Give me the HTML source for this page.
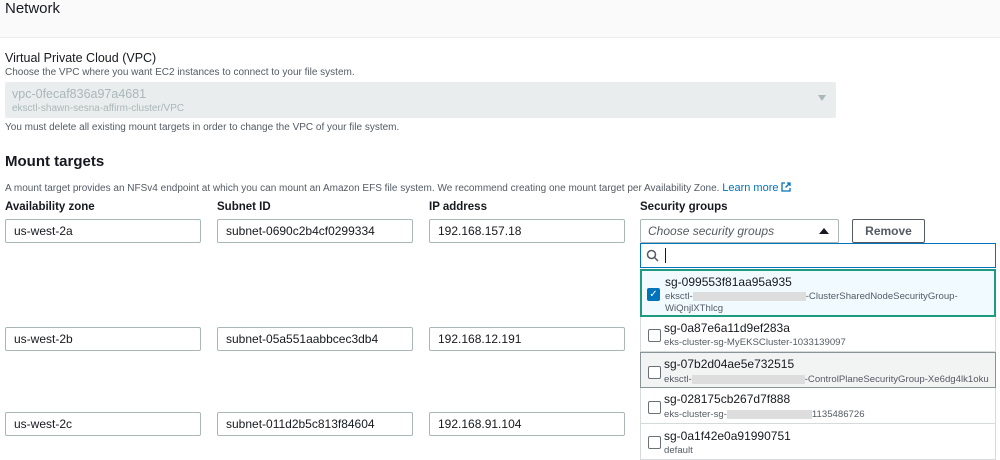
<html><head><style>
body{margin:0;width:1000px;height:456px;overflow:hidden;background:#fff;font-family:"Liberation Sans",sans-serif;color:#16191f;position:relative}
.a{position:absolute;white-space:nowrap}
.inp{position:absolute;border:1px solid #aab7b8;border-radius:2px;font-size:12px;line-height:22px;padding-left:8px;box-sizing:border-box;height:24px;white-space:nowrap}
.opt{position:absolute;left:640px;width:356px;box-sizing:border-box;border:1px solid #d5dbdb;border-top:none;white-space:nowrap;overflow:hidden}
.cb{position:absolute;left:7px;width:11px;height:11px;border:1px solid #687078;border-radius:2px;background:#fff}
.t1{position:absolute;left:23px;font-size:12px}
.t2{position:absolute;left:23px;font-size:9.6px;color:#545b64}
.blur{display:inline-block;background:#ddd;height:9px;vertical-align:middle}
</style></head><body>
<div class="a" style="left:0;top:0;width:1000px;height:37px;background:#fafafa;border-bottom:1px solid #eaeded"></div>
<div class="a" style="left:5px;top:0px;font-size:15px">Network</div>
<div class="a" style="left:5px;top:51px;font-size:12.5px">Virtual Private Cloud (VPC)</div>
<div class="a" style="left:5px;top:67px;font-size:10px;color:#545b64">Choose the VPC where you want EC2 instances to connect to your file system.</div>
<div class="a" style="left:5px;top:82px;width:831px;height:36px;background:#eaeded;border-radius:2px"></div>
<div class="a" style="left:12px;top:87px;font-size:12.5px;color:#aab7b8">vpc-0fecaf836a97a4681</div>
<div class="a" style="left:12px;top:103px;font-size:10px;color:#aab7b8">eksctl-shawn-sesna-affirm-cluster/VPC</div>
<div class="a" style="left:818px;top:95px;width:0;height:0;border-left:4px solid transparent;border-right:4px solid transparent;border-top:6px solid #aab7b8"></div>
<div class="a" style="left:5px;top:122px;font-size:10px;color:#545b64">You must delete all existing mount targets in order to change the VPC of your file system.</div>
<div class="a" style="left:5px;top:153px;font-size:15px;font-weight:bold">Mount targets</div>
<div class="a" style="left:5px;top:182px;font-size:10px;color:#545b64">A mount target provides an NFSv4 endpoint at which you can mount an Amazon EFS file system. We recommend creating one mount target per Availability Zone. <span style="color:#0073bb;font-size:11px">Learn more</span> <svg width="10" height="10" viewBox="0 0 10 10" style="vertical-align:-1px"><path d="M4 1H1v8h8V6M6 1h3v3M9 1L4.5 5.5" fill="none" stroke="#0073bb" stroke-width="1.3"/></svg></div>
<div class="a" style="left:5px;top:201px;font-size:11.5px;font-weight:bold">Availability zone</div>
<div class="a" style="left:217px;top:201px;font-size:11.5px;font-weight:bold">Subnet ID</div>
<div class="a" style="left:429px;top:201px;font-size:11.5px;font-weight:bold">IP address</div>
<div class="a" style="left:640px;top:201px;font-size:11.5px;font-weight:bold">Security groups</div>
<div class="inp" style="left:5px;top:219px;width:196px">us-west-2a</div>
<div class="inp" style="left:217px;top:219px;width:196px">subnet-0690c2b4cf0299334</div>
<div class="inp" style="left:429px;top:219px;width:196px">192.168.157.18</div>
<div class="inp" style="left:5px;top:327px;width:196px">us-west-2b</div>
<div class="inp" style="left:217px;top:327px;width:196px">subnet-05a551aabbcec3db4</div>
<div class="inp" style="left:429px;top:327px;width:196px">192.168.12.191</div>
<div class="inp" style="left:5px;top:412px;width:196px">us-west-2c</div>
<div class="inp" style="left:217px;top:412px;width:196px">subnet-011d2b5c813f84604</div>
<div class="inp" style="left:429px;top:412px;width:196px">192.168.91.104</div>
<div class="inp" style="left:640px;top:219px;width:199px;font-style:italic;color:#545b64;padding-left:7px">Choose security groups</div>
<div class="a" style="left:819px;top:228px;border-left:5px solid transparent;border-right:5px solid transparent;border-bottom:6px solid #16191f"></div>
<div class="inp" style="left:852px;top:219px;width:73px;font-weight:bold;text-align:center;padding:0;color:#545b64;border-color:#545b64">Remove</div>
<div class="a" style="left:640px;top:243px;width:356px;height:25px;box-sizing:border-box;border:1px solid #0073bb;background:#fff"></div>
<svg class="a" style="left:646px;top:249px" width="13" height="13" viewBox="0 0 13 13"><circle cx="5.5" cy="5.5" r="4" fill="none" stroke="#545b64" stroke-width="1.5"/><path d="M8.5 8.5L12 12" stroke="#545b64" stroke-width="1.5"/></svg>
<div class="a" style="left:665px;top:248px;width:1px;height:15px;background:#16191f"></div>
<div class="opt" style="top:269px;height:48px;border:2px solid #1e9a80;background:#f1faff"><div class="cb" style="left:5px;top:17px;background:#0073bb;border-color:#0073bb;color:#fff;font-size:10px;line-height:11px;text-align:center">✓</div><div class="t1" style="top:4px">sg-099553f81aa95a935</div><div class="t2" style="top:20px">eksctl-<span class="blur" style="width:113px"></span>-ClusterSharedNodeSecurityGroup-</div><div class="t2" style="top:32px">WiQnjlXThlcg</div></div>
<div class="opt" style="top:317px;height:35px"><div class="cb" style="top:12px"></div><div class="t1" style="top:4px">sg-0a87e6a11d9ef283a</div><div class="t2" style="top:20px">eks-cluster-sg-MyEKSCluster-1033139097</div></div>
<div class="opt" style="top:352px;height:36px;background:#f2f3f3;border:1px solid #879596"><div class="cb" style="top:13px"></div><div class="t1" style="top:4px">sg-07b2d04ae5e732515</div><div class="t2" style="top:21px">eksctl-<span class="blur" style="width:113px"></span>-ControlPlaneSecurityGroup-Xe6dg4lk1oku</div></div>
<div class="opt" style="top:388px;height:36px"><div class="cb" style="top:13px"></div><div class="t1" style="top:4px">sg-028175cb267d7f888</div><div class="t2" style="top:21px">eks-cluster-sg-<span class="blur" style="width:85px"></span>1135486726</div></div>
<div class="opt" style="top:424px;height:36px"><div class="cb" style="top:12px"></div><div class="t1" style="top:5px">sg-0a1f42e0a91990751</div><div class="t2" style="top:21px">default</div></div>
</body></html>
